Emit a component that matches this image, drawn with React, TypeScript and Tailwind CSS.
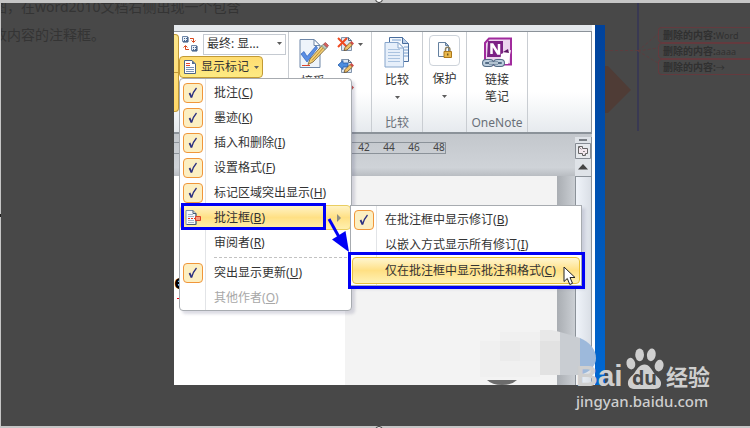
import type { ReactNode } from 'react';

type MenuEntry = {
  label: string;
  shortcut: string;
  checked?: boolean;
  disabled?: boolean;
};

const MARKUP_TYPES: MenuEntry[] = [
  { label: '批注', shortcut: 'C', checked: true },
  { label: '墨迹', shortcut: 'K', checked: true },
  { label: '插入和删除', shortcut: 'I', checked: true },
  { label: '设置格式', shortcut: 'F', checked: true },
  { label: '标记区域突出显示', shortcut: 'H', checked: true },
];

const BALLOON_OPTIONS: MenuEntry[] = [
  { label: '在批注框中显示修订', shortcut: 'B', checked: true },
  { label: '以嵌入方式显示所有修订', shortcut: 'I' },
];

const RULER_MARKS = ['42', '44', '46', '48'];

const DELETIONS = ['Word', 'aaaa', '→'];

export default function App() {
  return (
    <div className="relative flex min-h-screen w-full flex-col overflow-hidden bg-[#c6c6c6] pb-[2px] pl-px pt-[3px] font-['Noto_Sans','Noto_Sans_CJK_SC',sans-serif] text-xs text-[#333]">
      <div className="relative flex flex-1 items-start overflow-hidden bg-[#484848]">
        <Article />
        <Screenshot />
        <BalloonDiagram />
        <Watermark />
      </div>
      <span className="absolute left-0 top-[214px] h-[3px] w-px bg-[#222]" />
      <span className="absolute -top-[5px] left-1/2 size-2 rounded-full border border-[#333] bg-white" />
      <span className="absolute -bottom-[6px] left-1/2 size-2 rounded-full border border-[#333] bg-white" />
    </div>
  );
}

function Article() {
  return (
    <div className="-mt-[10px] w-[173px] shrink-0 whitespace-nowrap text-sm leading-7 text-[#343434]">
      <p className="-ml-2">图，在word2010文档右侧出现一个包含</p>
      <p className="-ml-2">改内容的注释框。</p>
    </div>
  );
}

function Screenshot() {
  return (
    <div className="relative mt-[22px] flex w-[431px] shrink-0 bg-white">
      <div className="flex min-w-0 flex-1 flex-col">
        <div className="h-[6px] bg-[#e4e8ec]" />
        <Ribbon />
        <Ruler />
        <Document />
      </div>
      <div className="w-[3px] bg-white" />
      <div className="w-[10px] bg-gradient-to-b from-[#00429b] via-[#0054b4] to-[#0068d2]" />
      <Mosaic />
      <MarkupMenu />
      <BalloonMenu />
      <Annotations />
    </div>
  );
}

function Ribbon() {
  return (
    <div className="flex h-[103px] border-b-2 border-r border-t border-[#8b9299] bg-gradient-to-b from-white from-60% to-[#e6eaee]">
      <div className="flex w-[115px] border-r border-[#c9cdd2]">
        <div className="mt-[2px] flex h-[78px] w-[5px] flex-col rounded-r-sm border-y border-r border-[#c29a35] bg-gradient-to-b from-[#fce68c] to-[#ffd768]">
          <div className="h-[38px] border-b border-[#c29a35]" />
        </div>
        <div className="flex flex-col">
          <div className="flex h-6 items-center">
            <PanesIcon />
            <div className="relative ml-1">
              <select
                aria-label="显示以供审阅"
                className="h-[21px] w-[83px] appearance-none border border-[#c5cad1] bg-white pl-[3px] text-xs leading-[18px] text-[#333] outline-none"
              >
                <option>最终: 显...</option>
              </select>
              <Caret className="pointer-events-none absolute right-1 top-2" />
            </div>
          </div>
          <button className="flex h-[22px] w-[84px] items-center rounded-sm border border-[#c29a35] bg-gradient-to-b from-[#ffdc70] to-[#fdeb83] pl-1 leading-4">
            <PageIcon />
            <span className="ml-[5px]">显示标记</span>
            <Caret className="ml-[5px]" />
          </button>
        </div>
      </div>
      <div className="flex w-[83px] border-r border-[#c9cdd2]">
        <button className="flex w-[48px] flex-col items-center overflow-hidden pt-[5px]">
          <ReviewIcon />
          <span className="mt-[5px] leading-4">接受</span>
        </button>
        <div className="flex flex-col gap-[5px] pt-1">
          <div className="flex items-center gap-1">
            <RejectIcon kind="reject" />
            <Caret />
          </div>
          <RejectIcon kind="back" />
          <RejectIcon kind="forward" />
        </div>
      </div>
      <RibbonGroup width="w-[51px]" caption="比较">
        <CompareIcon />
        <span className="mt-[3px] leading-[17px]">比较</span>
        <Caret className="mt-2" />
      </RibbonGroup>
      <RibbonGroup width="w-[44px]">
        <span className="-mt-[2px] flex h-[31px] w-[31px] items-center justify-center rounded-sm border border-[#cdd3da]">
          <LockIcon />
        </span>
        <span className="mt-1 leading-[17px]">保护</span>
        <Caret className="mt-2" />
      </RibbonGroup>
      <RibbonGroup width="w-[61px]" caption="OneNote">
        <OneNoteIcon />
        <span className="mt-[3px] w-6 leading-[17px]">链接笔记</span>
      </RibbonGroup>
    </div>
  );
}

function RibbonGroup({ width, caption, children }: { width: string; caption?: string; children: ReactNode }) {
  return (
    <div className={`flex flex-col items-center justify-between border-r border-[#c9cdd2] ${width}`}>
      <button className="flex flex-col items-center pt-[5px]">{children}</button>
      {caption && <span className="pb-px text-[#6a7079]">{caption}</span>}
    </div>
  );
}

function Ruler() {
  return (
    <div className="flex h-[42px] justify-between bg-gradient-to-b from-[#c3c7cc] via-[#cfd3d8] via-80% to-[#b9bdc2] pt-2">
      <div className="flex h-[12px] w-[272px] items-center justify-end gap-[13px] border border-l-0 border-[#8b9299] text-[10px] text-[#444]">
        {RULER_MARKS.map((mark) => (
          <span key={mark} className="w-3 text-center">
            {mark}
          </span>
        ))}
      </div>
      <div className="-mt-[5px] flex w-[17px] flex-col items-center border-r border-[#8b9299] bg-[#dfe3e8]">
        <span className="mt-[2px] h-[2px] w-2 bg-[#7a7f85]" />
        <ScrollCorner />
        <svg width="10" height="6" viewBox="0 0 10 6" className="mt-[5px]" aria-hidden="true">
          <path d="M0 5.5 5 0l5 5.5z" fill="#444" />
        </svg>
      </div>
    </div>
  );
}

function Document() {
  return (
    <div className="flex h-[209px]">
      <div className="w-[171px] bg-white pt-[94px]">
        <span className="block w-[10px] text-right text-xl font-bold leading-6 text-black">e</span>
        <span className="ml-[3px] mt-1 block h-px w-2 bg-red-600" />
      </div>
      <div className="flex-1 bg-[#f3f3f3]" />
      <div className="w-[18px] bg-gradient-to-r from-[#a9adb2] to-[#cbcfd4]" />
      <div className="w-[17px] border-x border-t border-[#8b9299] bg-gradient-to-r from-[#f0f4fa] to-[#dadfe6]" />
    </div>
  );
}

function CheckSlot({ checked }: { checked?: boolean }) {
  if (!checked) {
    return <span className="w-5 shrink-0" />;
  }
  return (
    <span className="flex h-5 w-5 shrink-0 items-center justify-center rounded-sm border border-[#f0963a] bg-[#fcefc2]">
      <svg width="10" height="12" viewBox="0 0 10 12" fill="none" aria-hidden="true">
        <path d="M3.500 10.500Q5 5 8.500 1" stroke="#2a2f80" strokeWidth="1.300" />
        <path d="M1.500 6 3.600 10.500" stroke="#2a2f80" strokeWidth="1.800" />
      </svg>
    </span>
  );
}

function MenuRow({ label, shortcut, checked, disabled }: MenuEntry) {
  return (
    <button
      role="menuitemcheckbox"
      aria-checked={Boolean(checked)}
      disabled={disabled}
      className="flex h-[25px] w-full items-center pl-[3px] text-left disabled:text-[#a8a8a8]"
    >
      <CheckSlot checked={checked} />
      <span className="pl-[11px]">
        {label}(<u>{shortcut}</u>)
      </span>
    </button>
  );
}

function MarkupMenu() {
  return (
    <div
      role="menu"
      className="absolute left-[5px] top-[53px] w-[173px] rounded-sm border border-[#a7abb0] bg-white pt-px shadow-[3px_3px_3px_rgba(80,80,120,0.2)]"
    >
      <div className="absolute inset-y-0 left-[25px] w-px bg-[#e2e4e7]" />
      {MARKUP_TYPES.map((entry) => (
        <MenuRow key={entry.shortcut} {...entry} />
      ))}
      <button
        role="menuitem"
        className="relative flex h-[25px] w-full items-center rounded-sm border border-[#e9cd62] bg-gradient-to-b from-[#fff3c4] via-[#ffe084] to-[#fff0ae] pl-1 text-left"
      >
        <BalloonIcon />
        <span className="flex-1 pl-3">
          批注框(<u>B</u>)
        </span>
        <svg width="5" height="8" viewBox="0 0 5 8" className="mr-2" aria-hidden="true">
          <path d="M0 0 4 4 0 8z" fill="#8d8d80" />
        </svg>
      </button>
      <MenuRow label="审阅者" shortcut="R" />
      <div className="my-[2px] ml-[34px] mr-1 border-t border-dashed border-[#c2c2c2]" />
      <MenuRow label="突出显示更新" shortcut="U" checked />
      <MenuRow label="其他作者" shortcut="O" disabled />
    </div>
  );
}

function BalloonMenu() {
  return (
    <div
      role="menu"
      className="absolute left-[176px] top-[180px] w-[232px] border border-[#a7abb0] bg-white pb-px pt-px shadow-[3px_3px_3px_rgba(80,80,120,0.2)]"
    >
      <div className="absolute inset-y-0 left-[25px] w-px bg-[#e2e4e7]" />
      {BALLOON_OPTIONS.map((entry) => (
        <MenuRow key={entry.shortcut} {...entry} />
      ))}
      <button
        role="menuitem"
        className="relative mx-px flex h-[27px] w-[228px] items-center rounded-sm border border-[#e9c13a] bg-gradient-to-b from-[#fff6cf] via-[#ffe084] to-[#fff2b4] pl-8 text-left"
      >
        <span>
          仅在批注框中显示批注和格式(<u>C</u>)
        </span>
      </button>
    </div>
  );
}

// Blue highlight boxes, the arrow between them and the mouse pointer
function Annotations() {
  return (
    <div className="pointer-events-none absolute inset-0">
      <div className="absolute left-[7px] top-[178px] h-[27px] w-[145px] border-[3px] border-[#0000f5]" />
      <div className="absolute left-[174px] top-[227px] h-[37px] w-[237px] border-[3px] border-[#0000f5]" />
      <svg className="absolute left-[153px] top-[190px]" width="26" height="40" viewBox="0 0 26 40" aria-hidden="true">
        <path d="M2 4 12 22" stroke="#0000f5" strokeWidth="3" />
        <path d="M5 24.500 18.500 16 22 37z" fill="#0000f5" />
      </svg>
      <svg className="absolute left-[389px] top-[241px]" width="14" height="20" viewBox="0 0 14 20" aria-hidden="true">
        <path d="M1 1v14.500l3.300-3 2.500 6 2.700-1.200-2.500-5.800H12z" fill="#fff" stroke="#222" strokeWidth="1" />
      </svg>
    </div>
  );
}

function Mosaic() {
  return (
    <svg className="absolute left-[305px] top-[304px]" width="118" height="56" viewBox="0 0 118 56" aria-hidden="true">
      <path d="M21 3h40v45H1V12h20z" fill="#f0f0f0" />
      <path d="M21 12h20v20H21z" fill="#ebebeb" />
      <path d="M41 12h20v20H41z" fill="#eeeeee" />
      <path d="M61 1h12l8 2v9H61z" fill="#e8e8e8" />
      <path d="M61 12h20v34H61z" fill="#e2e2e2" />
      <path d="M81 3q11 3 20 6v37H81z" fill="#c9cdd2" />
      <path d="M101 9c10 4 16 12 16 20s-6 14-16 17z" fill="#9db9db" />
      <path d="M8 51h30q-5 5-15 5T8 51z" fill="#6c6c6c" />
    </svg>
  );
}

function BalloonDiagram() {
  return (
    <div className="relative h-32 min-w-0 flex-1 overflow-hidden text-[10px] font-bold text-[#303030]">
      <svg className="absolute left-0 top-0" width="64" height="128" viewBox="0 0 64 128" fill="none" aria-hidden="true">
        <path d="M0 63h3l23 24L3 110H0z" fill="#4f3c36" />
        <path d="M33 0v128" stroke="#393952" strokeWidth="2" />
        <path d="M0 47.500h33M33 48 53 31M33 48l20-3M33 48l20 12" stroke="#5c3d3f" strokeDasharray="3 2" />
      </svg>
      <div className="ml-[53px] flex flex-col pt-6">
        {DELETIONS.map((text) => (
          <p key={text} className="h-4 rounded-l-sm border border-r-0 border-[#643a3e] pl-1 leading-[14px]">
            删除的内容:<span className="text-[9px] font-normal">{text}</span>
          </p>
        ))}
      </div>
    </div>
  );
}

function Watermark() {
  return (
    <div className="absolute bottom-[15px] right-10 flex w-[134px] flex-col text-[#cfcfcf]">
      <div className="flex items-end justify-between font-bold">
        <span className="font-['Liberation_Sans',sans-serif] text-[30px] leading-7">Bai</span>
        <svg width="39" height="43" viewBox="0 0 40 44" aria-hidden="true">
          <g fill="#cfcfcf">
            <ellipse cx="6" cy="17" rx="4.500" ry="6" transform="rotate(-12 6 17)" />
            <ellipse cx="15" cy="8" rx="4.500" ry="6.500" />
            <ellipse cx="27" cy="8" rx="4.500" ry="6.500" transform="rotate(10 27 8)" />
            <ellipse cx="35" cy="19" rx="4.500" ry="6" transform="rotate(12 35 19)" />
            <path d="M20 18c5 0 7 5 10 9s7 6 7 10c0 5-4 6-8 6H11c-5 0-8-2-8-6 0-5 4-7 7-11s5-8 10-8z" />
          </g>
          <text x="20" y="39" textAnchor="middle" fontSize="20" fill="#484848">
            du
          </text>
        </svg>
        <span className="text-[22px] leading-7">经验</span>
      </div>
      <a href="https://jingyan.baidu.com" className="mt-px text-[15px] font-medium leading-5">
        jingyan.baidu.com
      </a>
    </div>
  );
}

function Caret({ className }: { className?: string }) {
  return (
    <svg width="5" height="3" viewBox="0 0 5 3" className={className} aria-hidden="true">
      <path d="M0 0h5L2.500 3z" fill="#5c5c5c" />
    </svg>
  );
}

function PanesIcon() {
  return (
    <svg width="18" height="18" viewBox="0 0 18 18" fill="none" className="ml-[2px]" aria-hidden="true">
      <path d="M1.500 1.500h5v5h-5zM10.500 10.500h5v5h-5z" fill="#e9f0f8" stroke="#6d86a8" />
      <path d="M7 2v5H2M16 11v5h-5" stroke="#33507a" />
      <path d="M3 3.500h3M3 5.500h3M12 12.500h3M12 14.500h3" stroke="#45648e" strokeDasharray="1 1" />
      <path d="M9 3.500h3.500V7M10.500 5.500l2 2 2-2M8 14.500H4.500V11M2.500 12.500l2-2 2 2" stroke="#d9481c" />
    </svg>
  );
}

function PageIcon() {
  return (
    <svg width="12" height="14" viewBox="0 0 12 14" aria-hidden="true">
      <path d="M.5.5h7.500l3.500 3.500v9.500H.5z" fill="#fff" stroke="#4d6585" />
      <path d="M8 .5V4h3.500z" fill="#536e91" />
      <path d="M2 3.500h4M2 5.500h4" stroke="#e4492b" />
      <path d="M2 7.500h8M2 9.500h8M2 11.500h8" stroke="#7893b5" />
    </svg>
  );
}

function BalloonIcon() {
  return (
    <svg width="17" height="15" viewBox="0 0 17 15" aria-hidden="true">
      <path d="M1 .5h7l3 3v11H1z" fill="#f5f8fc" stroke="#7b8fa8" />
      <path d="M8 .5v3h3v11H2" fill="none" stroke="#455a72" />
      <path d="M3 4.500h5M3 6.500h6M3 10.500h6M3 12.500h6" stroke="#a5b4c6" />
      <path d="M3 8.500h7" stroke="#e23b20" strokeDasharray="2 1" />
      <path d="M10.500 6.500h5v4h-5z" fill="#f79a7d" stroke="#dd4327" />
    </svg>
  );
}

function ReviewIcon() {
  return (
    <svg width="32" height="32" viewBox="0 0 32 32" aria-hidden="true">
      <path d="M3 2.500h14l6 6v22H3z" fill="#eef4fb" stroke="#6e87a8" />
      <path d="M17 2.500v6h6z" fill="#fff" stroke="#6e87a8" />
      <path d="m4 17 3-2.500 3 5L19 9l1.500 2L10 25z" fill="#5b8fe4" stroke="#2c62bd" strokeWidth=".7" />
      <path d="m13 22 12.500-14L29 11.500 16 25l-5 2.500z" fill="#f2cf74" stroke="#725a2d" strokeWidth=".8" />
      <path d="M15 23.500 27 10" stroke="#b98a35" />
      <path d="m24.500 9 2-2 3.500 3.500-2 2z" fill="#b9c8bd" stroke="#61766e" strokeWidth=".6" />
      <path d="m26.500 7 2-1.500 3 3-1.500 2z" fill="#d9605c" stroke="#8b3e40" strokeWidth=".6" />
      <path d="M5 28.500h8" stroke="#e1452d" />
    </svg>
  );
}

function RejectIcon({ kind }: { kind: 'reject' | 'back' | 'forward' }) {
  return (
    <svg width="17" height="17" viewBox="0 0 17 17" fill="none" aria-hidden="true">
      <path d="M4.500 1.500h7l3 3v10h-10z" fill="#dfe8f3" stroke="#8193ab" />
      <path d="M11.500 1.500v3h3" stroke="#52647b" />
      {kind === 'reject' && <path d="m1 2 9 9M10 2l-9 9" stroke="#f04a20" strokeWidth="2" />}
      {kind === 'back' && <path d="m1 7 5-4.500V5h5v4H6v2.500z" fill="#4d8de0" stroke="#2359a5" strokeWidth=".8" />}
      {kind === 'forward' && <path d="M11 7 6 2.500V5H1v4h5v2.500z" fill="#4d8de0" stroke="#2359a5" strokeWidth=".8" />}
      <path d="m7 14.500 1-3 5-5 2.500 2.500-5.500 5z" fill="#f0c068" stroke="#614a2b" strokeWidth=".8" />
      <path d="m13 6.500 1.500-1.500L17 7.500 15.500 9z" fill="#ce4b45" />
    </svg>
  );
}

function CompareIcon() {
  return (
    <svg width="26" height="31" viewBox="0 0 26 31" aria-hidden="true">
      <path d="M5.500.5h13l6 6v18h-19z" fill="#f3f7fc" stroke="#496d9d" />
      <path d="M18.500.5v6h6" fill="#b9cee8" stroke="#496d9d" />
      <path d="M20 10h4M20 13h4M20 16h4M20 19h4M8 3h9" stroke="#7ba0ce" />
      <path d="M1 5.500h13l5.500 5.500v19H1z" fill="#e6effa" stroke="#86a5cb" />
      <path d="M14 5.500V11h5.500z" fill="#fff" stroke="#86a5cb" />
      <path d="M4 12.500h12M4 15.500h12M4 18.500h12M4 21.500h12M4 24.500h12" stroke="#aac3e0" />
    </svg>
  );
}

function LockIcon() {
  return (
    <svg width="14" height="17" viewBox="0 0 14 17" aria-hidden="true">
      <path d="M.5.500h7l3 3v11H.5z" fill="#f8fafd" stroke="#64809f" />
      <path d="M7.500.500v3h3z" fill="#b2c3d8" stroke="#64809f" />
      <path d="M7.500 10V7.500a2.200 2.200 0 0 1 4.400 0V10" fill="none" stroke="#8b8061" strokeWidth="1.500" />
      <path d="M6 9.500h7.500v6H6z" fill="#e8b84d" stroke="#ad791c" />
      <path d="M9.700 11.500v2" stroke="#6e5520" strokeWidth="1.500" />
    </svg>
  );
}

function OneNoteIcon() {
  return (
    <svg width="31" height="31" viewBox="0 0 31 31" aria-hidden="true">
      <path d="M7 1.500h22v26H3V6z" fill="#edd6ee" stroke="#a12b9d" strokeWidth="2" />
      <path d="M6 4h15v16H5z" fill="#7d2285" />
      <path d="M9.500 17V7.500h1L16 16.500h1V7" fill="none" stroke="#fff" strokeWidth="2.500" />
      <path d="m19 17 10-4-3 14h-8z" fill="#fff" />
      <path d="m21 15 5-3 1 4z" fill="#5d1764" />
      <g fill="none" stroke="#526b84" strokeWidth="4">
        <rect x="2" y="24" width="8" height="4" rx="2" />
        <rect x="13" y="24" width="8" height="4" rx="2" />
      </g>
      <g fill="none" stroke="#bccddd" strokeWidth="2">
        <rect x="2" y="24" width="8" height="4" rx="2" />
        <rect x="13" y="24" width="8" height="4" rx="2" />
      </g>
      <path d="M7 26h9" stroke="#526b84" strokeWidth="3" />
      <path d="M7 26h9" stroke="#d3dfea" strokeWidth="1.500" />
    </svg>
  );
}

function ScrollCorner() {
  return (
    <svg width="16" height="16" viewBox="0 0 16 16" className="mt-[2px] shrink-0" aria-hidden="true">
      <path d="M.500.500h15v15H.5z" fill="#e6e9ed" stroke="#858b93" />
      <path d="M3.500 3.500h4v2h5v5h-2v2h-3v-2h-4z" fill="#f4e9ef" stroke="#666" />
      <path d="m4 4 3 3M8 8l1 1 1-1M7 11l1.500 1.500L10 11" fill="none" stroke="#555" strokeDasharray="1 1" />
    </svg>
  );
}
